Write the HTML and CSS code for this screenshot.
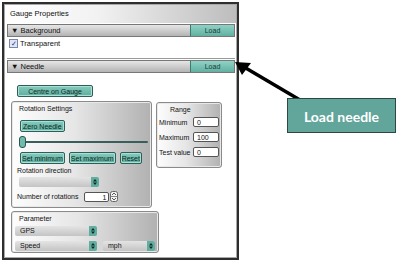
FILE: index.html
```html
<!DOCTYPE html>
<html>
<head>
    <title>Gauge Properties</title>
    <link rel="stylesheet" href="styles.css">
</head>
<body>
    <div id="panel">
        <div id="title">Gauge Properties</div>

        <div class="section-bar">
            <span class="bar-label">&#9660; Background</span>
            <button class="load-btn">Load</button>
        </div>
        <div class="section-body bg-body">
            <label class="check"><span class="checkbox">&#10003;</span>Transparent</label>
        </div>

        <div class="section-bar">
            <span class="bar-label">&#9660; Needle</span>
            <button class="load-btn">Load</button>
        </div>
        <div class="needle-body">
            <button class="teal-btn centre-btn">Centre on Gauge</button>
            <div class="row-groups">
                <div class="group rotation">
                    <div class="group-title">Rotation Settings</div>
                    <button class="teal-btn zero-btn">Zero Needle</button>
                    <div class="slider"><span class="thumb"></span></div>
                    <div class="btn-row">
                        <button class="teal-btn">Set minimum</button>
                        <button class="teal-btn">Set maximum</button>
                        <button class="teal-btn">Reset</button>
                    </div>
                    <div class="field-label">Rotation direction</div>
                    <div class="select dir-select">
                        <svg class="sel-arrow" width="8" height="10" viewBox="0 0 8 10"><path d="M4 2 L6 4.5 H2 Z M4 8 L6 5.5 H2 Z" fill="#102a26"/></svg>
                    </div>
                    <div class="rot-row">
                        <span>Number of rotations</span>
                        <span class="num-input">1</span>
                        <svg class="spin" width="8" height="11" viewBox="0 0 8 11">
                            <rect x="0.5" y="0.5" width="7" height="10" rx="2" fill="#f2f2f2" stroke="#666"/>
                            <line x1="0.5" y1="5.5" x2="7.5" y2="5.5" stroke="#888"/>
                            <path d="M2 4 L4 2 L6 4 M2 7 L4 9 L6 7" fill="none" stroke="#333" stroke-width="0.8"/>
                        </svg>
                    </div>
                </div>
                <div class="group range">
                    <div class="group-title range-title">Range</div>
                    <div class="range-row"><span>Minimum</span><span class="text-input">0</span></div>
                    <div class="range-row"><span>Maximum</span><span class="text-input">100</span></div>
                    <div class="range-row"><span>Test value</span><span class="text-input">0</span></div>
                </div>
            </div>
            <div class="group param">
                <div class="group-title">Parameter</div>
                <div class="select param-select">GPS
                    <svg class="sel-arrow" width="8" height="10" viewBox="0 0 8 10"><path d="M4 2 L6 4.5 H2 Z M4 8 L6 5.5 H2 Z" fill="#102a26"/></svg>
                </div>
                <div class="param-row">
                    <div class="select param-select">Speed
                        <svg class="sel-arrow" width="8" height="10" viewBox="0 0 8 10"><path d="M4 2 L6 4.5 H2 Z M4 8 L6 5.5 H2 Z" fill="#102a26"/></svg>
                    </div>
                    <div class="select unit-select">mph
                        <svg class="sel-arrow" width="8" height="10" viewBox="0 0 8 10"><path d="M4 2 L6 4.5 H2 Z M4 8 L6 5.5 H2 Z" fill="#102a26"/></svg>
                    </div>
                </div>
            </div>
        </div>
    </div>

    <!-- annotation -->
    <svg id="arrow" width="80" height="50" viewBox="0 0 80 50">
        <line x1="10" y1="7" x2="66" y2="40" stroke="#000" stroke-width="3.5"/>
        <polygon points="1,2 17,3 8,15" fill="#000"/>
    </svg>
    <div id="callout">Load needle</div>
</body>
</html>
```

FILE: styles.css
```css
body {
    font-family: "Liberation Sans", Arial, sans-serif;
    font-size: 7px;
    color: #111;
    background-color: #fff;
    margin: 0;
    padding: 0;
}
#panel {
    margin: 2px 0 0 2px;
    width: 231px;
    height: 252px;
    border: 2px solid #2e2e2e;
    box-shadow: inset 0 0 0 1px #a8a8a8;
    padding: 1px;
    position: relative;
}
#title {
    height: 18px;
    line-height: 18px;
    padding-left: 5px;
    font-size: 7.5px;
    background: linear-gradient(to right, #fff 0%, #f2f2f2 40%, #bdbdbd 100%);
}
.section-bar {
    margin: 1px 1px 0 2px;
    height: 11px;
    display: flex;
    justify-content: space-between;
    align-items: stretch;
    border: 1px solid #777;
    background: linear-gradient(to bottom, #e6e6e6, #b4b4b4);
}
.bar-label {
    padding-left: 3px;
    line-height: 11px;
    font-size: 7.5px;
}
.load-btn {
    width: 44px;
    padding: 0;
    font-family: inherit;
    font-size: 7px;
    color: #1e3a36;
    border: none;
    border-left: 1px solid #3d7b72;
    background: linear-gradient(to bottom, #8ed3c5, #62b0a1);
}
.section-body {
    margin: 0 1px 0 2px;
}
.bg-body {
    height: 21px;
    border-bottom: 1px solid #9a9a9a;
}
.check {
    display: flex;
    align-items: center;
    padding: 2px 0 0 2px;
    font-size: 7.5px;
}
.checkbox {
    width: 7px;
    height: 7px;
    margin-right: 2px;
    border: 1px solid #7b86a6;
    background: #dfe6f5;
    color: #1b2b8a;
    font-size: 7px;
    line-height: 7px;
    text-align: center;
}
.needle-body {
    padding: 12px 0 0 6px;
}
.teal-btn {
    font-family: inherit;
    font-size: 7px;
    color: #0f2622;
    white-space: nowrap;
    padding: 0 3px;
    height: 12px;
    border: 1px solid #2e5e57;
    border-radius: 2px;
    box-shadow: inset 0 0 0 1px #a8e0d5;
    background: linear-gradient(to bottom, #84cbbd, #5fae9f);
}
.centre-btn {
    width: 76px;
    margin-left: 6px;
}
.row-groups {
    display: flex;
    align-items: flex-start;
    gap: 4px;
    margin-top: 4px;
}
.group {
    border: 1px solid #8a8a8a;
    border-radius: 3px;
    box-shadow: inset 0 0 0 1px #e8e8e8;
    background: linear-gradient(to right, #fdfdfd 0%, #e6e6e6 45%, #b1b1b1 100%);
}
.group-title {
    padding: 3px 0 0 4px;
    height: 9px;
}
.rotation {
    width: 141px;
    height: 107px;
    padding-left: 3px;
    box-sizing: border-box;
}
.zero-btn {
    margin: 6px 0 0 5px;
    padding: 0 2px;
}
.slider {
    position: relative;
    margin: 9px 3px 0 4px;
    height: 2px;
    background: #3a5f5a;
    border-radius: 1px;
}
.thumb {
    position: absolute;
    left: 0;
    top: -5px;
    width: 5px;
    height: 10px;
    border: 1px solid #2c5650;
    border-radius: 3px;
    background: #6fbcad;
}
.btn-row {
    display: flex;
    gap: 4px;
    margin: 9px 0 0 5px;
}
.btn-row .teal-btn {
    padding: 0 1px;
}
.field-label {
    margin: 3px 0 0 2px;
}
.select {
    position: relative;
    height: 10px;
    line-height: 10px;
    padding-left: 5px;
    border-radius: 2px;
    background: linear-gradient(to bottom, #e4e4e4, #c4c4c4);
    box-sizing: border-box;
}
.sel-arrow {
    position: absolute;
    right: 0;
    top: 0;
    border-radius: 0 2px 2px 0;
    background: #5fae9f;
}
.dir-select {
    width: 80px;
    margin: 3px 0 0 4px;
}
.rot-row {
    display: flex;
    align-items: center;
    margin: 4px 0 0 2px;
}
.num-input {
    width: 25px;
    height: 10px;
    margin-left: 6px;
    padding-right: 2px;
    text-align: right;
    line-height: 10px;
    border: 1px solid #555;
    border-radius: 2px;
    background: #fff;
    box-sizing: border-box;
}
.spin {
    margin-left: 1px;
}
.range {
    width: 66px;
    height: 66px;
    margin-top: 1px;
    box-sizing: border-box;
}
.range-title {
    padding-left: 13px;
    height: 11px;
}
.range-row {
    display: flex;
    align-items: center;
    justify-content: space-between;
    padding: 0 2px 0 2px;
    margin-bottom: 5px;
}
.text-input {
    width: 26px;
    height: 10px;
    line-height: 10px;
    padding-left: 3px;
    border: 1px solid #555;
    border-radius: 2px;
    background: #fff;
    box-sizing: border-box;
}
.param {
    width: 148px;
    height: 42px;
    margin-top: 3px;
    box-sizing: border-box;
    padding-left: 3px;
}
.param .group-title {
    height: 8px;
}
.param-select {
    width: 82px;
    margin-top: 3px;
}
.param-row {
    display: flex;
    gap: 6px;
    margin-top: 5px;
}
.param-row .param-select {
    margin-top: 0;
}
.unit-select {
    width: 52px;
}
#arrow {
    position: absolute;
    left: 234px;
    top: 60px;
}
#callout {
    position: absolute;
    left: 287px;
    top: 98px;
    width: 109px;
    height: 35px;
    line-height: 35px;
    box-sizing: border-box;
    border: 1px solid #2d4743;
    background: #62a59b;
    color: #fff;
    font-family: Lato, "Open Sans", sans-serif;
    font-weight: bold;
    font-size: 14px;
    text-align: center;
}
```
